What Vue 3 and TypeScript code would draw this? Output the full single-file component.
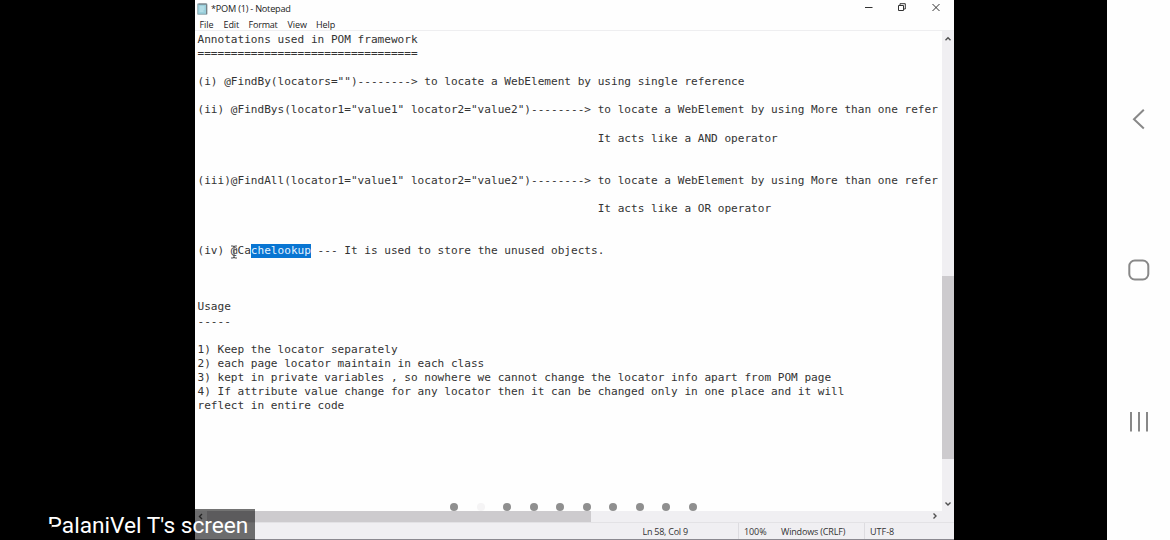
<script setup lang="ts">
interface DocumentLine {
  text: string
  selected?: string
  after?: string
}

const indent = ' '.repeat(60)
const lines: DocumentLine[] = [
  { text: 'Annotations used in POM framework' },
  { text: '='.repeat(33) },
  { text: '' },
  { text: '(i) @FindBy(locators="")--------> to locate a WebElement by using single reference' },
  { text: '' },
  { text: '(ii) @FindBys(locator1="value1" locator2="value2")--------> to locate a WebElement by using More than one refer' },
  { text: '' },
  { text: indent + 'It acts like a AND operator' },
  { text: '' },
  { text: '' },
  { text: '(iii)@FindAll(locator1="value1" locator2="value2")--------> to locate a WebElement by using More than one refer' },
  { text: '' },
  { text: indent + 'It acts like a OR operator' },
  { text: '' },
  { text: '' },
  { text: '(iv) @Ca', selected: 'chelookup', after: ' --- It is used to store the unused objects.' },
  { text: '' },
  { text: '' },
  { text: '' },
  { text: 'Usage' },
  { text: '-----' },
  { text: '' },
  { text: '1) Keep the locator separately' },
  { text: '2) each page locator maintain in each class' },
  { text: '3) kept in private variables , so nowhere we cannot change the locator info apart from POM page' },
  { text: '4) If attribute value change for any locator then it can be changed only in one place and it will' },
  { text: 'reflect in entire code' },
]
const menus: string[] = ['File', 'Edit', 'Format', 'View', 'Help']
const pageCount = 10
const activePage = 2
</script>

<template>
  <div class="screen">
    <main class="notepad">
      <header class="titlebar">
        <svg class="app-icon" width="11" height="12" viewBox="0 0 11 12">
          <rect x=".8" y="1" width="9" height="10.2" fill="#9bd0dc" stroke="#7b979f" stroke-width=".8" />
          <path d="M2.5 4h5M2.5 6h5M2.5 8h4" stroke="#d5f0f5" stroke-width=".8" />
          <path d="M1.5 1h8M9.7 1.5v9.5" stroke="#71777c" stroke-width="1" />
        </svg>
        <span class="title">*POM (1) - Notepad</span>
        <svg class="controls" width="80" height="14" viewBox="0 0 80 14" fill="none" stroke="#333" stroke-width="1">
          <path d="M1 7.5h7.5" />
          <path d="M34.5 5.5h5v5h-5zM36 5V3.7h5.3v5.3h-1.5" />
          <path d="M68.5 4l7 7m0-7l-7 7" />
        </svg>
      </header>
      <nav class="menubar">
        <span v-for="menu in menus" :key="menu" :class="['menu', menu.toLowerCase()]">{{ menu }}</span>
      </nav>
      <section class="workspace">
        <div class="editor">
          <div v-for="(line, i) in lines" :key="i" class="line">{{ line.text }}<span v-if="line.selected" class="selection">{{ line.selected }}</span>{{ line.after }}</div>
          <svg class="caret" width="8" height="14" viewBox="0 0 8 14" fill="none" stroke="#555" stroke-width="1.1">
            <path d="M1 1h2l1 1 1-1h2M4 2v10M1 13h2l1-1 1 1h2" />
          </svg>
        </div>
        <div class="vertical-scroll">
          <svg width="12" height="14" viewBox="0 0 12 14" fill="none" stroke="#505050" stroke-width="1.4"><path d="M3.5 9.3l2.5-2.5 2.5 2.5" /></svg>
          <div class="vertical-thumb"></div>
          <svg class="down" width="12" height="14" viewBox="0 0 12 14" fill="none" stroke="#505050" stroke-width="1.4"><path d="M3.5 5.5l2.5 2.5L8.5 5.5" /></svg>
        </div>
      </section>
      <div class="horizontal-scroll">
        <svg width="12" height="12" viewBox="0 0 12 12" fill="none" stroke="#505050" stroke-width="1.4"><path d="M7 3L4.5 5.5 7 8" /></svg>
        <div class="horizontal-thumb"></div>
        <svg class="right" width="12" height="12" viewBox="0 0 12 12" fill="none" stroke="#505050" stroke-width="1.4"><path d="M4.5 2.5L7 5 4.5 7.5" /></svg>
      </div>
      <footer class="statusbar">
        <span class="position">Ln 58, Col 9</span>
        <span class="zoom">100%</span>
        <span class="ending">Windows (CRLF)</span>
        <span class="encoding">UTF-8</span>
      </footer>
    </main>
    <aside class="navigation">
      <svg width="63" height="540" viewBox="0 0 63 540" fill="none" stroke="#888" stroke-width="2">
        <path d="M36.8 109.8L27 119.3l9.8 9.2" />
        <rect x="22.3" y="260.5" width="19" height="19" rx="5.5" />
        <path d="M24 412v19.5M32 412v19.5M40 412v19.5" />
      </svg>
    </aside>
    <div class="pages"><i v-for="page in pageCount" :key="page" :class="{ active: page === activePage }"></i></div>
    <div class="share-label"><span class="initial">P</span><span>alaniVel T's screen</span></div>
  </div>
</template>

<style>
body { margin: 0; overflow: hidden; }
</style>

<style scoped>
.screen { position: relative; display: flex; justify-content: space-between; width: 1170px; height: 540px; padding-left: 194.5px; box-sizing: border-box; background: #000; overflow: hidden; }
.notepad { display: flex; flex-direction: column; width: 759.5px; height: 540px; background: #fefefe; color: #333; font-family: "Open Sans", "Noto Sans", sans-serif; font-size: 9px; }
.titlebar { display: flex; align-items: center; height: 17px; padding-left: 2.5px; flex: none; box-sizing: border-box; }
.app-icon { margin-right: 3px; }
.title { width: 79px; white-space: nowrap; font-size: 9.2px; letter-spacing: -.24px; color: #222; }
.controls { margin: -3px 10.5px 0 auto; }
.menubar { display: flex; height: 14px; box-sizing: border-box; border-bottom: 1px solid #eeeef0; line-height: 15px; font-size: 9px; padding-left: 5px; flex: none; }
.menu { white-space: nowrap; color: #222; letter-spacing: -.1px; }
.file { width: 24px; }
.edit { width: 25px; }
.format { width: 39px; letter-spacing: -.2px; }
.view { width: 28.5px; }
.workspace { display: flex; height: 480px; flex: none; }
.editor { position: relative; width: 745px; padding: 2px 0 0 3px; box-sizing: border-box; overflow: hidden; font-family: "DejaVu Sans Mono", monospace; font-size: 11.08px; line-height: 14.08px; color: #333; }
.line { height: 14.08px; white-space: pre; }
.selection { display: inline-block; height: 14px; background: #0875d2; color: #e4f2ff; vertical-align: top; }
.caret { position: absolute; left: 35px; top: 214px; }
.vertical-scroll { display: flex; flex-direction: column; width: 12px; margin-left: 2.5px; background: #f0eff2; }
.vertical-scroll svg { flex: none; }
.vertical-thumb { height: 183px; margin-top: 231px; background: #cdcbce; }
.down { margin-top: auto; }
.horizontal-scroll { display: flex; height: 11px; flex: none; background: #f0eff2; }
.horizontal-thumb { width: 384px; background: #cdcbce; }
.right { margin: 0 13px 0 auto; }
.statusbar { display: flex; height: 18px; box-sizing: border-box; background: #f0eff2; border-top: 1px solid #e3e2e5; border-bottom: 1px solid #8b8990; line-height: 18px; font-size: 9px; color: #333; white-space: nowrap; }
.position { width: 95.5px; margin-left: 448px; letter-spacing: -.25px; }
.statusbar .zoom { width: 32px; padding-left: 5px; border-left: 1px solid #dddce0; letter-spacing: -.1px; }
.ending { width: 83px; padding-left: 5px; letter-spacing: -.17px; }
.encoding { padding-left: 5px; border-left: 1px solid #dddce0; }
.navigation { width: 63px; height: 540px; background: #fefefe; }
.pages { position: absolute; left: 450.4px; top: 503px; display: flex; gap: 18.5px; }
.pages i { width: 8px; height: 8px; border-radius: 50%; background: #8f8f8f; }
.pages .active { background: #f5f4f5; }
.share-label { position: absolute; left: 43px; top: 509px; display: flex; width: 212px; height: 31px; padding-left: 4.5px; box-sizing: border-box; background: rgba(0, 0, 0, .55); color: #fff; font-family: Roboto, sans-serif; font-size: 22.7px; line-height: 33px; white-space: nowrap; }
.initial { height: 33px; clip-path: polygon(0 0, 100% 0, 100% 19px, 4.2px 19px, 4.2px 15px, 0 15px); }
</style>
